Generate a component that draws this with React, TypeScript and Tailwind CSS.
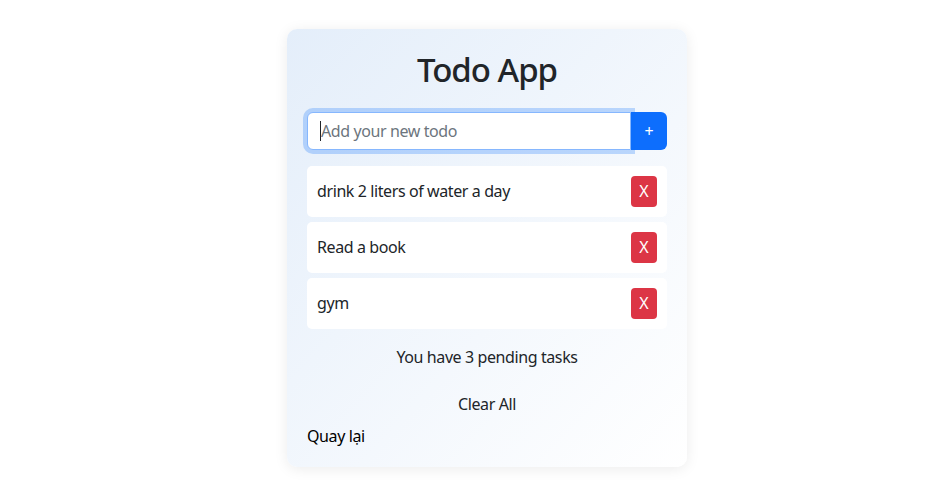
import { FC } from 'react';

const todos = ['drink 2 liters of water a day', 'Read a book', 'gym'];

const TodoItem: FC<{ text: string }> = ({ text }) => (
  <li className="flex items-center justify-between bg-white rounded-[5px] h-[51px] pl-[10px] pr-[10px]">
    <span className="text-[16px] text-[#212529]">{text}</span>
    <button className="w-[26px] h-[31px] rounded-[4px] bg-[#dc3545] text-white text-[16px] leading-none tracking-normal">
      X
    </button>
  </li>
);

export default function App() {
  return (
    <div className="min-h-[501px] bg-white flex justify-center pl-[45px] pt-[29px] font-['Noto_Sans','Segoe_UI',sans-serif] tracking-[-0.4px]">
      <div className="w-[400px] h-[438px] rounded-[10px] bg-gradient-to-br from-[#e4eefa] to-[#ffffff] shadow-[0_2px_14px_rgba(0,0,0,0.08)] px-[20px] pt-[21px]">
        <h1 className="text-center text-[33px] font-medium text-[#212529] leading-[1.2] tracking-[-1px] mb-[22px]">
          Todo App
        </h1>
        <div className="flex h-[38px] mb-[16px]">
          <div className="flex-1 flex items-center bg-white border border-[#86b7fe] rounded-l-[6px] shadow-[0_0_0_4px_rgba(13,110,253,0.25)] pl-[12px] relative z-10">
            <span className="w-px h-[20px] bg-[#212529]" />
            <span className="text-[16px] text-[#6c757d]">Add your new todo</span>
          </div>
          <button className="w-[36px] bg-[#0d6efd] text-white rounded-r-[6px] text-[16px]">+</button>
        </div>
        <ul className="flex flex-col gap-[5px]">
          {todos.map((t) => (
            <TodoItem key={t} text={t} />
          ))}
        </ul>
        <p className="text-center text-[16px] text-[#212529] mt-[16px]">You have 3 pending tasks</p>
        <div className="text-center mt-[23px]">
          <button className="text-[16px] text-[#212529]">Clear All</button>
        </div>
        <a className="block text-[16px] text-black mt-[8px]">Quay lại</a>
      </div>
    </div>
  );
}
